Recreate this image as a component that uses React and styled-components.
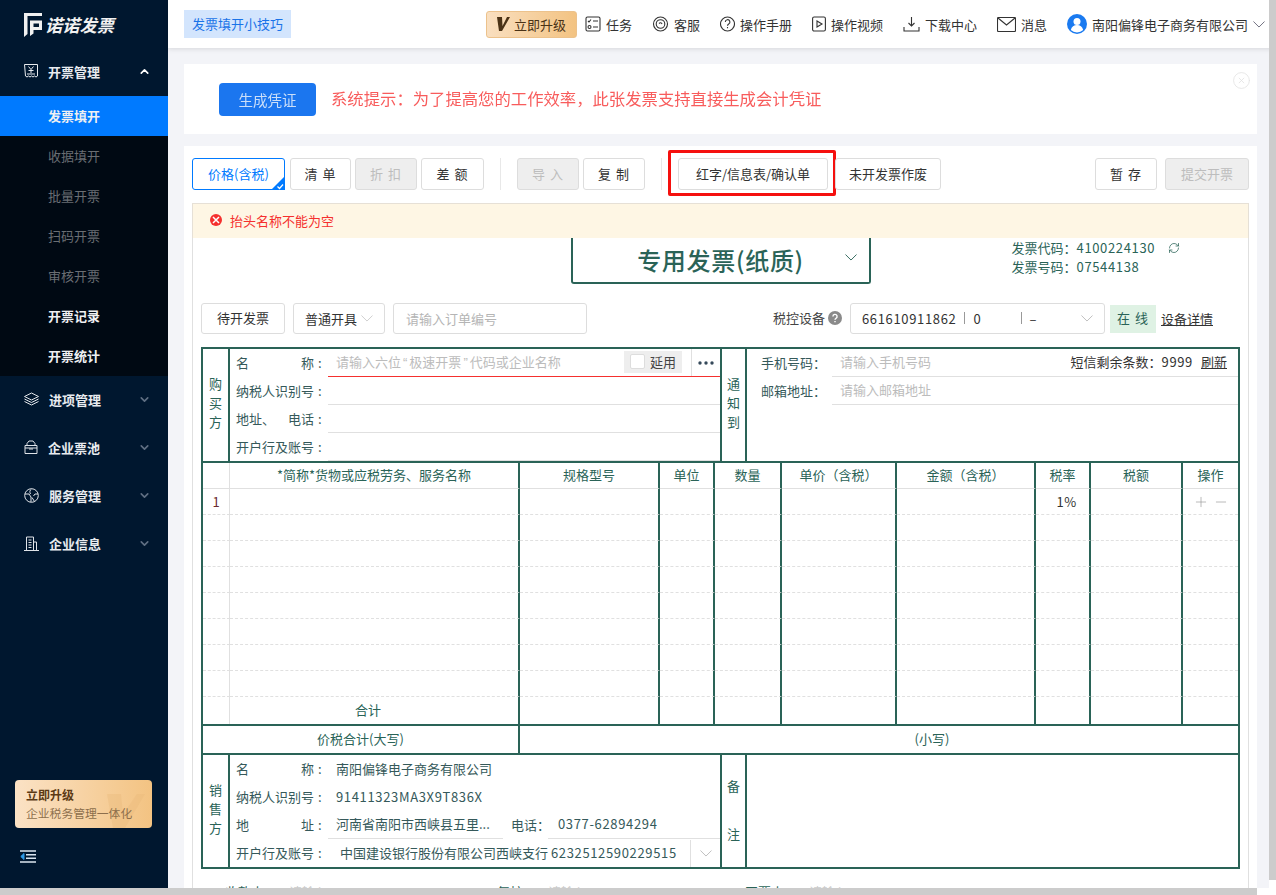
import React from "react";
import styled, { createGlobalStyle } from "styled-components";
import { ChevronDown, ChevronUp, CircleX, Minus, Plus, RefreshCw } from "lucide-react";

const GREEN = "#2a6357";
const COLS = "27px 290px 140px 55px 67px 115px 139px 55px 92px 55px";
const FONT = `"Noto Sans CJK SC", "Liberation Sans", sans-serif`;
// full-width punctuation
const COLON = "\uFF1A";
const COMMA = "\uFF0C";
const LP = "\uFF08";
const RP = "\uFF09";

const GlobalStyle = createGlobalStyle`
  html, body { margin: 0; height: 100%; overflow: hidden; }
  body { font-family: ${FONT}; font-size: 13px; color: #333; }
  * { box-sizing: border-box; }
`;

const Page = styled.div`
  position: relative;
  height: 100vh;
  overflow: hidden;
  background: #fff;
`;

const VScroll = styled.div`
  position: absolute;
  top: 0;
  right: 0;
  bottom: 0;
  width: 7px;
  background: #fff;
  &::after { content: ""; display: block; height: 880px; background: #ccc; }
`;

const HScroll = styled.div`
  position: absolute;
  left: 0;
  right: 0;
  bottom: 0;
  height: 7px;
  background: #fff;
  &::after { content: ""; display: block; width: 1257px; height: 7px; background: #ccc; }
`;

const Canvas = styled.div`
  width: 1281px;
  height: 896px;
  display: flex;
  overflow: hidden;
  background: #f3f4f8;
`;

const Sidebar = styled.aside`
  width: 168px;
  flex: none;
  display: flex;
  flex-direction: column;
  background: #00172f;
  color: #fff;
`;

const Logo = styled.div`
  height: 48px;
  display: flex;
  align-items: center;
  gap: 3px;
  padding-left: 24px;
`;

const LogoText = styled.span`
  font-size: 17.25px;
  font-weight: 700;
  font-style: italic;
  color: #f1f1f1;
`;

const MenuItem = styled.div`
  height: 48px;
  display: flex;
  align-items: center;
  padding: 0 17px 2px 24px;
  font-weight: 700;
  color: #e8ebef;
  span { margin-left: 10px; flex: 1; }
`;

const SubMenu = styled.div`
  background: #000913;
`;

const SubItem = styled.div`
  height: 40px;
  display: flex;
  align-items: center;
  padding: 0 0 2px 48px;
  font-weight: ${p => (p.$dim ? 400 : 700)};
  color: ${p => (p.$dim ? "#6a6e73" : "#eef0f2")};
  background: ${p => (p.$active ? "#007aff" : "transparent")};
`;

const UpgradeCard = styled.div`
  position: relative;
  margin: auto 16px 0 15px;
  height: 48px;
  padding: 6px 11px;
  border-radius: 4px;
  overflow: hidden;
  background: linear-gradient(90deg, #fbe2c5, #f3c382);
`;

const CardMark = styled.svg`
  position: absolute;
  right: 7px;
  top: 14px;
`;

const CardTitle = styled.div`
  position: relative;
  font-size: 12px;
  line-height: 18px;
  font-weight: 700;
  color: #5b3a14;
`;

const CardSub = styled.div`
  position: relative;
  font-size: 11.8px;
  line-height: 18px;
  white-space: nowrap;
  color: #8d6f4c;
`;

const Collapse = styled.div`
  height: 68px;
  padding: 20px 0 0 20px;
`;

const Main = styled.main`
  flex: 1;
  min-width: 0;
  display: flex;
  flex-direction: column;
`;

const Header = styled.header`
  height: 48px;
  flex: none;
  display: flex;
  align-items: center;
  padding: 0 16px 0 16px;
  background: #fff;
  box-shadow: 0 1px 5px rgba(0, 0, 0, 0.12);
`;

const TipTag = styled.div`
  width: 107px;
  height: 28px;
  line-height: 28px;
  text-align: center;
  background: #d3e5fd;
  color: #1a73e8;
`;

const UpgradeButton = styled.div`
  margin-left: auto;
  width: 91px;
  height: 27px;
  display: flex;
  align-items: center;
  gap: 4px;
  padding-left: 9px;
  border: 1px solid #ecc28c;
  border-radius: 3px;
  background: linear-gradient(90deg, #f9dfc0, #f3c382);
  color: #4a3216;
`;

const HeaderItems = styled.div`
  display: flex;
  align-items: center;
  gap: 20px;
  margin-left: 8px;
`;

const HeaderItem = styled.div`
  display: flex;
  align-items: center;
  gap: 5px;
  color: #333;
  white-space: nowrap;
`;

const Content = styled.div`
  flex: 1;
  min-height: 0;
  padding: 16px 24px 0 16px;
`;

const Notice = styled.section`
  height: 70px;
  display: flex;
  align-items: flex-start;
  padding: 7px 6px 0 35px;
  background: #fff;
`;

const VoucherButton = styled.div`
  width: 97px;
  height: 33px;
  margin-top: 12px;
  line-height: 33px;
  text-align: center;
  font-size: 14.5px;
  color: #c9def9;
  background: #1b76ef;
  border-radius: 4px;
  filter: blur(0.4px);
`;

const NoticeText = styled.div`
  margin: 13px auto 0 15px;
  font-size: 16.35px;
  line-height: 28px;
  white-space: nowrap;
  color: #f85c5c;
  filter: blur(0.3px);
`;

const Panel = styled.section`
  margin-top: 12px;
  padding: 12px 8px 0;
  background: #fff;
`;

const Toolbar = styled.div`
  height: 32px;
  display: flex;
  align-items: center;
  gap: 4px;
`;

const Btn = styled.div`
  position: relative;
  flex: none;
  width: ${p => p.$w}px;
  height: 32px;
  display: flex;
  align-items: center;
  justify-content: center;
  padding-bottom: 2px;
  margin-left: ${p => p.$ml || 0};
  margin-right: ${p => p.$mr || 0};
  border: 1px solid ${p => (p.$primary ? "#007aff" : "#ddd")};
  border-radius: 3px;
  white-space: pre;
  letter-spacing: ${p => (p.$spaced ? "1px" : "0")};
  color: ${p => (p.$primary ? "#007aff" : p.$disabled ? "#bdbdbd" : "#333")};
  background: ${p => (p.$disabled ? "#eee" : "#fff")};
`;

const CheckCorner = styled.svg`
  position: absolute;
  right: -1px;
  bottom: -1px;
`;

const Divider = styled.i`
  width: 1px;
  height: 32px;
  margin: 0 12px;
  background: #e8e8e8;
`;

const Highlight = styled.div`
  position: absolute;
  inset: -9px -9px -7px -11px;
  border: 3px solid #f5100e;
  border-radius: 2px;
  pointer-events: none;
`;

const Alert = styled.div`
  height: 35px;
  margin-top: 13px;
  display: flex;
  align-items: center;
  gap: 8px;
  padding: 0 0 2px 17px;
  background: #fef6e4;
  border: 1px solid #e6e0d6;
  border-bottom: none;
  color: #f5302e;
`;

const AlertDot = styled.span`
  width: 12px;
  height: 12px;
  display: flex;
  align-items: center;
  justify-content: center;
  border-radius: 50%;
  background: #f5302e;
`;

const Body = styled.div`
  padding: 0 8px;
  border-left: 1px solid #e0e0e0;
  border-right: 1px solid #e0e0e0;
`;

const TypeRow = styled.div`
  height: 65px;
  display: grid;
  grid-template-columns: 1fr 300px 1fr;
  margin: 0 -8px;
`;

const TypeBox = styled.div`
  grid-column: 2;
  height: 46px;
  display: grid;
  grid-template-columns: 1fr auto 1fr;
  align-items: center;
  border: 2px solid ${GREEN};
  border-top: none;
  border-radius: 0 0 3px 3px;
  color: ${GREEN};
  svg { justify-self: end; margin: 0 12px 6px 0; }
`;

const TypeTitle = styled.div`
  grid-column: 2;
  font-size: 24px;
  line-height: 42px;
  font-weight: 500;
  letter-spacing: 0.7px;
`;

const Codes = styled.div`
  padding-left: 141px;
  line-height: 19px;
  color: ${GREEN};
  white-space: nowrap;
`;

const CodeLine = styled.div`
  display: flex;
  align-items: center;
  svg { margin-left: 13px; }
`;

const Num = styled.span`
  letter-spacing: 0.65px;
`;

const DeviceRow = styled.div`
  height: 31px;
  display: flex;
  align-items: center;
  gap: 8px;
  padding-right: 27px;
`;

const Box = styled.div`
  flex: none;
  width: ${p => p.$w}px;
  height: 31px;
  display: flex;
  align-items: center;
  padding: 0 ${p => p.$px ?? 12}px ${p => (p.$center ? 2 : 1)}px;
  border: 1px solid #ddd;
  border-radius: 3px;
  color: ${p => (p.$muted ? "#b5b5b5" : "#333")};
  justify-content: ${p => (p.$center ? "center" : "flex-start")};
  svg { flex: none; }
`;

const BoxSpacer = styled.span`
  flex: 1;
`;

const DeviceLabel = styled.div`
  margin-left: auto;
  display: flex;
  align-items: center;
  gap: 3px;
  padding-bottom: 2px;
  color: #444;
`;

const Sep = styled.span`
  width: 1px;
  height: 12px;
  margin: ${p => p.$m || "0 8px"};
  background: #999;
`;

const Online = styled.div`
  width: 46px;
  height: 28px;
  margin-left: -3px;
  line-height: 26px;
  text-align: center;
  letter-spacing: 1px;
  background: #dff2e4;
  color: ${GREEN};
`;

const Underlined = styled.a`
  color: #333;
  text-decoration: underline;
  margin-left: ${p => p.$ml || 0}px;
`;

const Sheet = styled.div`
  margin-top: 13px;
  border: 2px solid ${GREEN};
  color: #35595a;
`;

const Section = styled.div`
  display: grid;
  grid-template-columns: 27px 492px 25px 1fr;
  height: ${p => p.$h}px;
  border-bottom: ${p => (p.$last ? "none" : `2px solid ${GREEN}`)};
`;

const SideCell = styled.div`
  display: flex;
  align-items: center;
  justify-content: center;
  padding-bottom: ${p => p.$pb ?? 6}px;
  border-right: 2px solid ${GREEN};
`;

const Stack = styled.div`
  width: 13px;
  line-height: ${p => p.$lh || 19}px;
  color: ${GREEN};
`;

const Fields = styled.div`
  display: flex;
  flex-direction: column;
  min-width: 0;
  border-right: ${p => (p.$open ? "none" : `2px solid ${GREEN}`)};
`;

const FieldRow = styled.div`
  height: 28px;
  flex: none;
  display: flex;
  align-items: center;
  padding-left: ${p => p.$pl ?? 6}px;
`;

const Label = styled.div`
  flex: none;
  width: ${p => p.$w || 92}px;
  margin-left: ${p => p.$ml || 0}px;
  display: flex;
  padding-bottom: 2px;
  white-space: nowrap;
  color: #35595a;
`;

const LabelText = styled.span`
  width: 78px;
  display: flex;
  justify-content: space-between;
  margin-right: 4px;
`;

const Field = styled.div`
  flex: 1;
  min-width: 0;
  height: 28px;
  display: flex;
  align-items: center;
  padding: 0 0 2px ${p => p.$pl ?? 8}px;
  border-bottom: ${p => (p.$plain ? "none" : `1px solid ${p.$error ? "#f5302e" : "#e0e0e0"}`)};
  white-space: pre;
`;

const AddressField = styled(Field)`
  flex: none;
  width: ${p => p.$w}px;
`;

const Placeholder = styled.span`
  color: #bcbcbc;
`;

const Quote = styled.span`
  font-family: "Liberation Sans", sans-serif;
  padding: 0 2px;
`;

const DelayBox = styled.div`
  width: 58px;
  height: 22px;
  margin-left: auto;
  display: flex;
  align-items: center;
  gap: 5px;
  padding: 0 0 1px 6px;
  background: #eee;
  color: #444;
  i { width: 15px; height: 15px; background: #fff; border: 1px solid #ddd; border-radius: 2px; }
`;

const More = styled.div`
  width: 29px;
  height: 27px;
  margin: 2px 0 0 9px;
  display: flex;
  align-items: center;
  justify-content: center;
  border-left: 1px solid #e0e0e0;
`;

const SmsInfo = styled.div`
  margin-left: auto;
  padding-right: 11px;
  display: flex;
  align-items: center;
  color: #333;
`;

const ItemRow = styled.div`
  display: grid;
  grid-template-columns: ${COLS};
  height: ${p => p.$h || 26}px;
`;

const ItemCell = styled.div`
  display: flex;
  align-items: center;
  justify-content: ${p => p.$align || "center"};
  gap: 4px;
  padding: ${p => p.$pad || "0"};
  color: ${p => p.$color || GREEN};
  border-right: ${p => (p.$thin ? "1px solid #e0e0e0" : p.$end ? "none" : `2px solid ${GREEN}`)};
  border-bottom: ${p => p.$line || "none"};
`;

const TotalRow = styled.div`
  display: grid;
  grid-template-columns: 317px 1fr;
  height: 31px;
  border-top: 2px solid ${GREEN};
  border-bottom: 2px solid ${GREEN};
`;

const TotalCell = styled.div`
  display: flex;
  align-items: center;
  justify-content: center;
  padding: 0 0 2px ${p => p.$pl || 0}px;
  color: ${GREEN};
  border-right: ${p => (p.$end ? "none" : `2px solid ${GREEN}`)};
`;

const BankSelect = styled.div`
  width: 30px;
  height: 27px;
  flex: none;
  display: flex;
  align-items: center;
  justify-content: center;
  border-left: 1px solid #e0e0e0;
`;

const SignRow = styled.div`
  display: grid;
  grid-template-columns: 272px 248px 1fr;
  margin-top: 13px;
  padding-left: 24px;
  color: ${GREEN};
`;

const Sign = styled.div`
  display: flex;
  gap: 12px;
  span { color: #ccc; }
`;

const StrokeIcon = ({ size = 16, children }) => (
  <svg width={size} height="16" viewBox={`0 0 ${size} 16`} fill="none" stroke="currentColor" strokeWidth="1.100">{children}</svg>
);

const Chevron = ({ size = 13, color = "#aaa" }) => (
  <svg width={size} height={size / 2 + 1} viewBox="0 0 13 7.500" fill="none" stroke={color} strokeWidth="1"><path d="M.5.500l6 6 6-6" /></svg>
);

const LogoMark = () => (
  <svg width="18" height="25" viewBox="0 0 18 25" fill="#f1f1f1">
    <path d="M0 1h18v3H3.500v18L0 25z" />
    <path d="M6 8.500h12V18H9.500v3.500L6 24zM9.500 11.500v3.500H15v-3.500z" />
  </svg>
);

const InvoiceIcon = () => (
  <svg width="14" height="14" viewBox="0 0 14 14" fill="none" stroke="#e8ebef" strokeWidth="1">
    <path d="M.5.500h13v11.500l-1.500 1-1.500-1-1.500 1-1.500-1-1.500 1-1.500-1-1.500 1-1.500-1z" />
    <path d="M4.500 2.500 7 5.500l2.500-3M7 5.500v3.500M4.500 6.500h5M3 10h8" />
  </svg>
);

const LayersIcon = () => (
  <svg width="15" height="15" viewBox="0 0 15 15" fill="none" stroke="#dfe3e8" strokeWidth="1">
    <path d="M7.500 1 14.500 4.500 7.500 8 .5 4.500zM.5 7l7 3.500 7-3.500M.5 9.500l7 3.500 7-3.500" />
  </svg>
);

const PoolIcon = () => (
  <svg width="14" height="14" viewBox="0 0 14 14" fill="none" stroke="#dfe3e8" strokeWidth="1">
    <path d="M1 5.500h12v8H1zM3 5.500V3.500L5 1h4l2 2.500v2M5 9h4M1 8h12" />
  </svg>
);

const ServiceIcon = () => (
  <svg width="15" height="15" viewBox="0 0 15 15" fill="none" stroke="#dfe3e8" strokeWidth="1">
    <circle cx="7.500" cy="7.500" r="6.800" />
    <path d="M1 6h4l2 3v5M14 6h-3L9.500 8M8 9.500l2.500 4M7.500 1c-2 1.500-2 3-1 5" />
  </svg>
);

const BuildingIcon = () => (
  <svg width="15" height="15" viewBox="0 0 15 15" fill="none" stroke="#dfe3e8" strokeWidth="1">
    <path d="M0 14.500h15M2.500 14.500V1h7v13.500M9.500 6h3v8.500M4.500 4h3M4.500 6.500h3M4.500 9h3M4.500 11.500h3" />
  </svg>
);

const CollapseIcon = () => (
  <svg width="16" height="13" viewBox="0 0 16 13" fill="none" stroke="#dbe6f0" strokeWidth="1.400">
    <path d="M0 1h16M6 4.700h10M6 8.300h10M0 12h16" />
    <path d="M4 3.500v6L.8 6.500z" fill="#2f9be8" stroke="#2f9be8" strokeWidth="1" />
  </svg>
);

const HelpFilled = () => (
  <svg width="14" height="14" viewBox="0 0 14 14" fill="none">
    <circle cx="7" cy="7" r="7" fill="#8a8a8a" />
    <path d="M4.900 5.400a2.100 2.100 0 1 1 3.100 1.900c-.7.4-1 .8-1 1.500M7 10v1.200" stroke="#fff" strokeWidth="1.400" />
  </svg>
);

const menuBelow = [
  ["进项管理", <LayersIcon />],
  ["企业票池", <PoolIcon />],
  ["服务管理", <ServiceIcon />],
  ["企业信息", <BuildingIcon />],
];

const subItems = [
  ["发票填开", { $active: true }],
  ["收据填开", { $dim: true }],
  ["批量开票", { $dim: true }],
  ["扫码开票", { $dim: true }],
  ["审核开票", { $dim: true }],
  ["开票记录", {}],
  ["开票统计", {}],
];

const headerItems = [
  ["任务", <StrokeIcon><rect x="1" y="1" width="14" height="14" rx="1.500" /><path d="M8 5h5M8 11h5M3 5l1 1 2-2.500" /><circle cx="4.500" cy="11" r="1.500" /></StrokeIcon>],
  ["客服", <StrokeIcon size={17}><circle cx="8.500" cy="8" r="7" /><circle cx="8.500" cy="8" r="4.300" /><path d="M7 7.500c1-1 2.500-1 3 .5" /></StrokeIcon>],
  ["操作手册", <StrokeIcon size={15}><circle cx="7.500" cy="8" r="7" /><path d="M5.300 6a2.300 2.300 0 1 1 3.400 2c-.8.500-1.200.9-1.200 1.800M7.500 11v1.300" /></StrokeIcon>],
  ["操作视频", <StrokeIcon size={14}><rect x=".6" y="1" width="12.800" height="14" rx="1.500" /><path d="M5 5l5 3-5 3z" /></StrokeIcon>],
  ["下载中心", <StrokeIcon size={17}><path d="M8.500 1v9M5.500 7l3 3 3-3M1 11v4h15v-4" /></StrokeIcon>],
  ["消息", <svg width="19" height="15" viewBox="0 0 19 15" fill="none" stroke="currentColor" strokeWidth="1.100"><rect x=".5" y=".5" width="18" height="14" rx="1" /><path d="M1 1l8.500 7L18 1" /></svg>],
];

const columns = ["", "*简称*货物或应税劳务、服务名称", "规格型号", "单位", "数量", `单价${LP}含税${RP}`, `金额${LP}含税${RP}`, "税率", "税额", "操作"];

function InvoiceRow({ index, rate, actions, label, h }) {
  const line = label ? "none" : "1px dashed #e0e0e0";
  return (
    <ItemRow $h={h}>
      <ItemCell $thin $line={line} $color="#6b2a30">{index}</ItemCell>
      <ItemCell $line={line} $pad="0 12px 2px 0">{label}</ItemCell>
      <ItemCell $line={line} />
      <ItemCell $line={line} />
      <ItemCell $line={line} />
      <ItemCell $line={line} />
      <ItemCell $line={line} />
      <ItemCell $line={line} $align="flex-end" $pad="0 12px 0 0" $color="#333"><Num>{rate}</Num></ItemCell>
      <ItemCell $line={line} />
      <ItemCell $end $line={line} $color="#999">
        {actions && <><Plus size={16} strokeWidth={1} /><Minus size={16} strokeWidth={1} /></>}
      </ItemCell>
    </ItemRow>
  );
}

function FieldLabel({ text }) {
  return (
    <Label>
      <LabelText>{text.split(" ").map(part => <span key={part}>{part}</span>)}</LabelText>:
    </Label>
  );
}

export default function App() {
  return (
    <Page>
      <GlobalStyle />
      <Canvas>
        <Sidebar>
          <Logo><LogoMark /><LogoText>诺诺发票</LogoText></Logo>
          <MenuItem><InvoiceIcon /><span>开票管理</span><ChevronUp size={13} strokeWidth={3} color="#fff" /></MenuItem>
          <SubMenu>
            {subItems.map(([name, flags]) => <SubItem key={name} {...flags}>{name}</SubItem>)}
          </SubMenu>
          {menuBelow.map(([name, icon]) => (
            <MenuItem key={name}>{icon}<span>{name}</span><ChevronDown size={13} strokeWidth={3} color="#5f6f83" /></MenuItem>
          ))}
          <UpgradeCard>
            <CardMark width="38" height="34" viewBox="0 0 38 34" fill="#e8b87a" opacity="0.35">
              <path d="M0 0h14l2 20L30 0h8L18 34H6z" />
            </CardMark>
            <CardTitle>立即升级</CardTitle>
            <CardSub>企业税务管理一体化</CardSub>
          </UpgradeCard>
          <Collapse><CollapseIcon /></Collapse>
        </Sidebar>

        <Main>
          <Header>
            <TipTag>发票填开小技巧</TipTag>
            <UpgradeButton>
              <svg width="14" height="14" viewBox="0 0 14 14" fill="#4a3216"><path d="M1 0h5l.5 9L11 0h3L6 14H3z" /></svg>
              立即升级
            </UpgradeButton>
            <HeaderItems>
              {headerItems.map(([name, icon]) => <HeaderItem key={name}>{icon}{name}</HeaderItem>)}
              <HeaderItem>
                <svg width="20" height="20" viewBox="0 0 20 20">
                  <circle cx="10" cy="10" r="10" fill="#1a7af0" />
                  <circle cx="10" cy="7.500" r="3.500" fill="#fff" />
                  <path d="M3.800 16c.8-3.500 3.200-5 6.200-5s5.400 1.500 6.200 5a9 9 0 0 1-12.400 0z" fill="#fff" />
                </svg>
                南阳偏锋电子商务有限公司
                <Chevron size={12} color="#667" />
              </HeaderItem>
            </HeaderItems>
          </Header>

          <Content>
            <Notice>
              <VoucherButton>生成凭证</VoucherButton>
              <NoticeText>{`系统提示${COLON}为了提高您的工作效率${COMMA}此张发票支持直接生成会计凭证`}</NoticeText>
              <CircleX size={19} strokeWidth={1} color="#e2e2e2" />
            </Notice>

            <Panel>
              <Toolbar>
                <Btn $w={93} $primary $mr="1px">
                  价格(含税)
                  <CheckCorner width="14" height="14" viewBox="0 0 14 14">
                    <path d="M14 0v14H0z" fill="#007aff" />
                    <path d="M6.500 10.500l2 2 3.500-4" fill="none" stroke="#fff" strokeWidth="1.200" />
                  </CheckCorner>
                </Btn>
                <Btn $w={61} $spaced>清 单</Btn>
                <Btn $w={62} $spaced $disabled>折 扣</Btn>
                <Btn $w={63} $spaced>差 额</Btn>
                <Divider />
                <Btn $w={62} $spaced $disabled>导 入</Btn>
                <Btn $w={62} $spaced>复 制</Btn>
                <Divider />
                <Btn $w={150}>红字/信息表/确认单<Highlight /></Btn>
                <Btn $w={106} $ml="3px">未开发票作废</Btn>
                <Btn $w={62} $spaced $ml="auto" $mr="4px">暂 存</Btn>
                <Btn $w={84} $disabled>提交开票</Btn>
              </Toolbar>

              <Alert>
                <AlertDot>
                  <svg width="8" height="8" viewBox="0 0 8 8" stroke="#fff" strokeWidth="1.500"><path d="M1 1l6 6M7 1L1 7" /></svg>
                </AlertDot>
                抬头名称不能为空
              </Alert>

              <Body>
                <TypeRow>
                  <TypeBox>
                    <TypeTitle>专用发票(纸质)</TypeTitle>
                    <Chevron size={12} color={GREEN} />
                  </TypeBox>
                  <Codes>
                    <CodeLine>{`发票代码${COLON}`}<Num>4100224130</Num><RefreshCw size={12} strokeWidth={1.500} /></CodeLine>
                    <CodeLine>{`发票号码${COLON}`}<Num>07544138</Num></CodeLine>
                  </Codes>
                </TypeRow>

                <DeviceRow>
                  <Box $w={84} $center>待开发票</Box>
                  <Box $w={92} $px={11}>普通开具<BoxSpacer /><Chevron size={12} color="#ccc" /></Box>
                  <Box $w={194} $muted>请输入订单编号</Box>
                  <DeviceLabel>税控设备<HelpFilled /></DeviceLabel>
                  <Box $w={255} $px={11}>
                    <Num>661610911862</Num><Sep />0<Sep $m="0 8px 0 40px" />–
                    <BoxSpacer />
                    <Chevron size={12} color="#bbb" />
                  </Box>
                  <Online>在 线</Online>
                  <Underlined $ml={-3}>设备详情</Underlined>
                </DeviceRow>

                <Sheet>
                  <Section $h={114}>
                    <SideCell><Stack>购买方</Stack></SideCell>
                    <Fields>
                      <FieldRow>
                        <FieldLabel text="名 称" />
                        <Field $error>
                          <Placeholder>请输入六位<Quote>{"\u201C"}</Quote>极速开票<Quote>{"\u201D"}</Quote>代码或企业名称</Placeholder>
                          <DelayBox><i />延用</DelayBox>
                          <More>
                            <svg width="16" height="4" viewBox="0 0 16 4" fill="#35495a"><circle cx="2" cy="2" r="1.700" /><circle cx="8" cy="2" r="1.700" /><circle cx="14" cy="2" r="1.700" /></svg>
                          </More>
                        </Field>
                      </FieldRow>
                      <FieldRow><FieldLabel text="纳税人识别号" /><Field /></FieldRow>
                      <FieldRow><FieldLabel text="地址、 电话" /><Field /></FieldRow>
                      <FieldRow><FieldLabel text="开户行及账号" /><Field /></FieldRow>
                    </Fields>
                    <SideCell><Stack>通知到</Stack></SideCell>
                    <Fields $open>
                      <FieldRow $pl={14}>
                        <Label $w={71}>{`手机号码${COLON}`}</Label>
                        <Field>
                          <Placeholder>请输入手机号码</Placeholder>
                          <SmsInfo>{`短信剩余条数${COLON}`}<Num>9999</Num><Underlined $ml={8}>刷新</Underlined></SmsInfo>
                        </Field>
                      </FieldRow>
                      <FieldRow $pl={14}>
                        <Label $w={71}>{`邮箱地址${COLON}`}</Label>
                        <Field><Placeholder>请输入邮箱地址</Placeholder></Field>
                      </FieldRow>
                    </Fields>
                  </Section>

                  <ItemRow>
                    {columns.map((name, i) => (
                      <ItemCell key={i} $thin={i === 0} $end={i === 9} $pad="0 0 2px" $line="1px solid #e0e0e0">{name}</ItemCell>
                    ))}
                  </ItemRow>
                  <InvoiceRow index="1" rate="1%" actions />
                  {Array.from({ length: 7 }, (_, i) => <InvoiceRow key={i} />)}
                  <InvoiceRow label="合计" h={27} />

                  <TotalRow>
                    <TotalCell>价税合计(大写)</TotalCell>
                    <TotalCell $end $pl={106}>(小写)</TotalCell>
                  </TotalRow>

                  <Section $h={112} $last>
                    <SideCell><Stack>销售方</Stack></SideCell>
                    <Fields>
                      <FieldRow><FieldLabel text="名 称" /><Field $plain>南阳偏锋电子商务有限公司</Field></FieldRow>
                      <FieldRow><FieldLabel text="纳税人识别号" /><Field $plain><Num>91411323MA3X9T836X</Num></Field></FieldRow>
                      <FieldRow>
                        <FieldLabel text="地 址" />
                        <AddressField $w={175}>河南省南阳市西峡县五里...</AddressField>
                        <Label $w={37} $ml={8}>{`电话${COLON}`}</Label>
                        <Field $pl={10}><Num>0377-62894294</Num></Field>
                      </FieldRow>
                      <FieldRow>
                        <FieldLabel text="开户行及账号" />
                        <Field $plain $pl={12}>中国建设银行股份有限公司西峡支行 <Num>6232512590229515</Num></Field>
                        <BankSelect><Chevron size={12} color="#bbb" /></BankSelect>
                      </FieldRow>
                    </Fields>
                    <SideCell $pb={2}><Stack $lh={48}>备注</Stack></SideCell>
                    <Fields $open />
                  </Section>
                </Sheet>

                <SignRow>
                  <Sign>{`收款人${COLON}`}<span>请输入</span></Sign>
                  <Sign>{`复核${COLON}`}<span>请输入</span></Sign>
                  <Sign>{`开票人${COLON}`}<span>请输入</span></Sign>
                </SignRow>
              </Body>
            </Panel>
          </Content>
        </Main>
      </Canvas>
      <VScroll />
      <HScroll />
    </Page>
  );
}
